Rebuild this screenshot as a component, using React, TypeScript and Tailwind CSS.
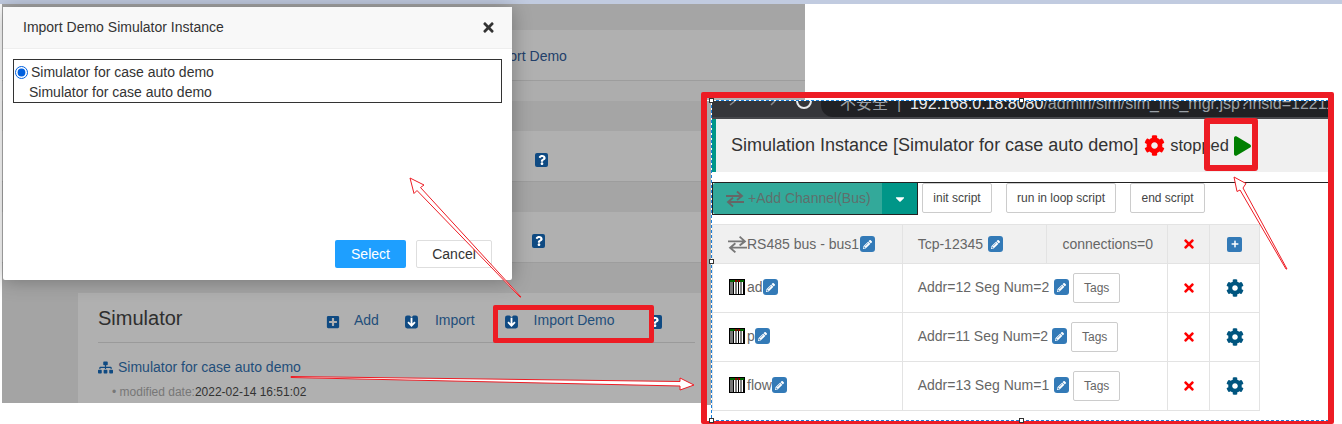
import React from "react";
import { FaPlusSquare, FaSitemap, FaCog, FaPencilAlt, FaTimes, FaPlay, FaQuestion, FaCaretDown, FaPlus } from "react-icons/fa";

const Transfer = ({ className = "" }: { className?: string }) => (
  <svg viewBox="0 0 18 18" className={className} fill="none" stroke="currentColor" strokeWidth="2">
    <path d="M0 6h15M11 1.5 16 6l-5 4" strokeWidth="1.8" />
    <path d="M18 12H3M7 7.8 2 12l5 4.5" strokeWidth="1.8" />
  </svg>
);

const ImportIcon = () => (
  <svg viewBox="0 0 12 13" className="w-[13px] h-[14px]">
    <path d="M2 .5h2.2L6 2 7.8.5H10q2 0 2 2v8q0 2-2 2H2q-2 0-2-2v-8q0-2 2-2Z" fill="#0f4a82" />
    <path d="M6 2.5v7M2.8 6.6 6 10l3.2-3.4" fill="none" stroke="#fff" strokeWidth="1.7" />
  </svg>
);

const HelpIcon = () => (
  <span className="flex items-center justify-center w-[13px] h-[14px] rounded-[2px] bg-[#0f4a82] text-white">
    <FaQuestion className="w-[8px] h-[10px]" />
  </span>
);

const EditBtn = () => (
  <span className="inline-flex shrink-0 items-center justify-center w-[15px] h-[16px] rounded-[3px] bg-[#337ab7] text-white">
    <FaPencilAlt className="w-[9px] h-[9px]" />
  </span>
);

const Device = () => (
  <svg viewBox="0 0 16 16" className="w-[16px] h-[16px] shrink-0">
    <rect x="0.5" y="0.5" width="15" height="15" fill="#fff" stroke="#000" />
    <rect x="1" y="1" width="14" height="2" fill="#006400" />
    <rect x="6" y="1" width="2" height="2" fill="#8b0000" />
    <rect x="9" y="1" width="2" height="2" fill="#8b0000" />
    <rect x="1" y="3" width="3" height="12" fill="#777" />
    <path d="M4.5 3v12M7 3v12M9.5 3v12M12 3v12M14.5 3v12" stroke="#000" strokeWidth="1" />
  </svg>
);

const Band = ({ dark, h }: { dark?: boolean; h: string }) => (
  <div className={dark ? `${h} bg-[#a5a5a5]` : `${h} bg-[#b0b0b0] border-b border-[#9d9d9d]`} />
);

const Arrow = ({ points }: { points: string }) => (
  <polygon points={points} fill="#fff" stroke="#ed1c24" strokeWidth="1" />
);

const rows = [
  { name: "ad", addr: "Addr=12 Seg Num=2", ml: "ml-[5px]", tagMl: "ml-[4px]" },
  { name: "p", addr: "Addr=11 Seg Num=2", ml: "ml-[4px]", tagMl: "ml-[4px]" },
  { name: "flow", addr: "Addr=13 Seg Num=1", ml: "ml-[5px]", tagMl: "ml-[4px]" },
];

export default function App() {
  return (
    <div className="relative w-[1342px] h-[424px] overflow-hidden bg-white font-['Liberation_Sans',Arial,sans-serif] text-[14px]">
      <div className="h-[4px] bg-[#c1cbe0]" />

      {/* dimmed page */}
      <div className="absolute left-[2px] top-[4px] w-[803px] h-[399px] bg-[#a4a4a4] overflow-hidden">
        <Band dark h="h-[26px]" />
        <div className="relative h-[51px] bg-[#b0b0b0] border-b border-[#9d9d9d]">
          <span className="absolute left-[484px] top-[16px] text-[#22406a]">Import Demo</span>
        </div>
        <div className="h-[20px] bg-[#adadad]" />
        <Band dark h="h-[30px]" />
        <div className="relative h-[51px] bg-[#b0b0b0] border-b border-[#9d9d9d]">
          <div className="absolute left-[533px] top-[22px]"><HelpIcon /></div>
        </div>
        <Band dark h="h-[30px]" />
        <div className="relative h-[51px] bg-[#b0b0b0] border-b border-[#9d9d9d]">
          <div className="absolute left-[530px] top-[22px]"><HelpIcon /></div>
        </div>
        <Band dark h="h-[30px]" />
        <div className="ml-[76px] h-[110px] bg-[#b0b0b0] px-[20px]">
          <div className="flex items-center h-[50px] border-b border-[#9a9a9a] w-[597px]">
            <span className="text-[20px] text-[#2e2e2e] w-[228px]">Simulator</span>
            <FaPlusSquare className="w-[14px] h-[14px] text-[#0f4a82] mt-[8px]" />
            <span className="ml-[14px] text-[#1f4e7a] mt-[6px]">Add</span>
            <span className="ml-[26px] mt-[8px] flex"><ImportIcon /></span>
            <span className="ml-[17px] text-[#1f4e7a] mt-[6px]">Import</span>
            <span className="ml-[30px] mt-[8px] flex"><ImportIcon /></span>
            <span className="ml-[16px] text-[#1f4e7a] mt-[6px]">Import Demo</span>
            <span className="ml-[34px] mt-[8px] flex"><HelpIcon /></span>
          </div>
          <div className="flex items-center gap-[5px] mt-[14px] text-[#1f4e7a]">
            <FaSitemap className="w-[15px] h-[13px] text-[#0f4a82]" />
            <span>Simulator for case auto demo</span>
          </div>
          <div className="ml-[14px] mt-[5px] text-[12px] text-[#777]">
            • modified date:<span className="text-[#333]">2022-02-14 16:51:02</span>
          </div>
        </div>
      </div>

      {/* red highlight on Import Demo */}
      <div className="absolute left-[493px] top-[305px] w-[161px] h-[38px] border-[5px] border-[#ed1c24] rounded-[2px]" />

      {/* modal */}
      <div className="absolute left-[3px] top-[7px] w-[509px] h-[273px] bg-white rounded-[2px] shadow-[0_1px_20px_rgba(0,0,0,0.3)] flex flex-col">
        <div className="h-[42px] shrink-0 bg-[#f8f8f8] border-b border-[#eeeeee] flex items-center justify-between pl-[20px] pr-[16px] text-[#333]">
          <span>Import Demo Simulator Instance</span>
          <FaTimes className="w-[15px] h-[15px] text-[#333] font-light" />
        </div>
        <div className="mx-[10px] mt-[10px] h-[44px] border border-[#333] text-[#333] leading-[20px] pt-[2px]">
          <div className="flex items-center">
            <input type="radio" defaultChecked className="w-[13px] h-[13px] m-0 ml-px mr-[3px] accent-[#0060df]" />
            <span>Simulator for case auto demo</span>
          </div>
          <div className="pl-[15px]">Simulator for case auto demo</div>
        </div>
        <div className="mt-auto mb-[12px] mr-[20px] flex justify-end gap-[10px]">
          <span className="w-[71px] h-[28px] flex items-center justify-center bg-[#1e9fff] text-white rounded-[2px]">Select</span>
          <span className="w-[76px] h-[28px] flex items-center justify-center bg-white border border-[#dedede] text-[#333] rounded-[2px]">Cancel</span>
        </div>
      </div>

      {/* screenshot panel with red frame */}
      <div className="absolute left-[701px] top-[92px] w-[633px] h-[332px] bg-white border-[6px] border-b-[3px] border-[#ed1c24] rounded-[2px] overflow-hidden flex flex-col">
        <div className="h-[2px] w-[98px] shrink-0 bg-[#b4b4b4]" />
        <div className="flex flex-1 pt-[1px]">
          <div className="w-[4px] h-[304px] bg-[#a9a9a9] shrink-0" />
          <div className="flex-1 min-w-0 pl-[1px]">
            {/* browser chrome, cut off at the top */}
            <div className="relative h-[18px] bg-[#35363a] border-b-2 border-[#47484c] overflow-hidden text-[#e8eaed]">
              <div className="absolute left-[109px] top-0 w-[520px] h-[16px] bg-[#202124] rounded-bl-[12px]" />
              <svg viewBox="0 0 100 16" className="absolute left-[15px] top-0 w-[100px] h-[16px]" fill="none" stroke="#8a8b8e" strokeWidth="1.5">
                <path d="M8 0 3 4M44 4 48 0" />
                <path d="M70 0a7 7 0 0 0 14 0" stroke="#e8eaed" strokeWidth="2" />
              </svg>
              <span className="absolute left-[128px] top-[-9px] whitespace-nowrap text-[16px] font-['Liberation_Sans','Noto_Sans_CJK_SC',sans-serif] text-[#9aa0a6]">
                不安全 &nbsp;|&nbsp; <span className="text-[#e8eaed]">192.168.0.18:8080</span>
                <span>/admin/sim/sim_ins_mgr.jsp?insid=1221111011</span>
              </span>
            </div>

            {/* heading */}
            <div className="h-[53px] bg-[#f0f0f0] border-l-[4px] border-[#009688] flex items-center pl-[15px] text-[18px] text-[#333] whitespace-nowrap">
              <span>Simulation Instance [Simulator for case auto demo]</span>
              <FaCog className="w-[21px] h-[21px] ml-[6px] text-[#f00]" />
              <span className="ml-[5px] text-[16.5px]">stopped</span>
              <FaPlay className="w-[17px] h-[20px] ml-[5px] text-[#008000]" />
            </div>

            {/* toolbar */}
            <div className="mt-[10px] border-t border-[#222] h-[33px] flex items-stretch">
              <div className="w-[206px] h-[32px] border border-[#222] border-t-0 flex overflow-hidden">
                <div className="w-[169px] bg-[#33a99a] flex items-center pl-[13px] text-[14px] text-[#5f6f6c] rounded-l-[2px]">
                  <Transfer className="w-[18px] h-[18px] text-[#666] shrink-0" />
                  <span className="ml-[4px]">+Add Channel(Bus)</span>
                </div>
                <div className="flex-1 bg-[#009688] flex items-center justify-center text-white">
                  <FaCaretDown className="w-[14px] h-[14px]" />
                </div>
              </div>
              <div className="ml-[4px] flex items-start text-[12px] text-[#444]">
                <span className="w-[70px] h-[30px] border border-[#ccc] rounded-[2px] flex items-center justify-center">init script</span>
                <span className="ml-[14px] w-[110px] h-[30px] border border-[#ccc] rounded-[2px] flex items-center justify-center">run in loop script</span>
                <span className="ml-[14px] w-[75px] h-[30px] border border-[#ccc] rounded-[2px] flex items-center justify-center">end script</span>
              </div>
            </div>

            {/* table */}
            <div className="mt-[9px] w-[548px] border-t border-l border-[#e3e3e3] text-[#666]">
              <div className="flex h-[39px] bg-[#f0f0f0] border-b border-[#e3e3e3]">
                <div className="w-[190px] border-r border-[#e3e3e3] flex items-center pl-[15px]">
                  <Transfer className="w-[19px] h-[19px] text-[#777] shrink-0" />
                  <span>RS485 bus - bus1</span>
                  <span className="ml-[1px] flex"><EditBtn /></span>
                </div>
                <div className="w-[145px] border-r border-[#e3e3e3] flex items-center pl-[15px] gap-[5px]">
                  <span>Tcp-12345</span>
                  <EditBtn />
                </div>
                <div className="w-[121px] border-r border-[#e3e3e3] flex items-center pl-[15px]">connections=0</div>
                <div className="w-[42px] border-r border-[#e3e3e3] flex items-center justify-center">
                  <FaTimes className="w-[14px] h-[14px] text-[#f00]" />
                </div>
                <div className="w-[50px] border-r border-[#e3e3e3] flex items-center justify-center">
                  <span className="w-[15px] h-[15px] rounded-[2px] bg-[#337ab7] text-white flex items-center justify-center">
                    <FaPlus className="w-[8px] h-[8px]" />
                  </span>
                </div>
              </div>
              {rows.map((r) => (
                <div key={r.name} className="flex h-[49px] border-b border-[#e3e3e3]">
                  <div className="w-[190px] border-r border-[#e3e3e3] flex items-center pl-[16px] pb-[2px]">
                    <Device />
                    <span className="ml-[2px]">{r.name}</span>
                    <EditBtn />
                  </div>
                  <div className="w-[266px] border-r border-[#e3e3e3] flex items-center pl-[15px]">
                    <span className="pb-[2px]">{r.addr}</span>
                    <span className={`${r.ml} flex pb-[2px]`}><EditBtn /></span>
                    <span className={`${r.tagMl} w-[47px] h-[30px] border border-[#ccc] rounded-[2px] flex items-center justify-center text-[12px]`}>Tags</span>
                  </div>
                  <div className="w-[42px] border-r border-[#e3e3e3] flex items-center justify-center">
                    <FaTimes className="w-[14px] h-[14px] text-[#f00]" />
                  </div>
                  <div className="w-[50px] border-r border-[#e3e3e3] flex items-center justify-center">
                    <FaCog className="w-[18px] h-[18px] text-[#00557f]" />
                  </div>
                </div>
              ))}
            </div>
          </div>
        </div>
      </div>

      {/* red highlight on the play button */}
      <div className="absolute left-[1204px] top-[118px] w-[54px] h-[53px] border-[6px] border-[#ed1c24] rounded-[3px]" />

      {/* annotation overlay */}
      <svg className="absolute left-0 top-0 pointer-events-none" width="1342" height="424" viewBox="0 0 1342 424">
        <Arrow points="520,297 417,190.5 414,193.5 410,178 424,185 420.5,187.5 521,297" />
        <Arrow points="291,376.5 680,381.5 680,378 694,385 680,390 680,386 291,377.5" />
        <Arrow points="1286,269 1240,190 1237,191.5 1234,177 1246,183.5 1243,188 1287,269" />
        <g fill="none" stroke="#1a7fd8" strokeWidth="1" strokeDasharray="3 2">
          <path d="M711 100.5H1328M711.5 100V420M711 420.5H1328" />
        </g>
        <g fill="#fff" stroke="#333" strokeWidth="1">
          <rect x="709.5" y="98.5" width="4" height="4" />
          <rect x="1019.5" y="98.5" width="4" height="4" />
          <rect x="709.5" y="259.5" width="4" height="4" />
          <rect x="709.5" y="418.5" width="4" height="4" />
          <rect x="1019.5" y="418.5" width="4" height="4" />
        </g>
      </svg>
    </div>
  );
}
